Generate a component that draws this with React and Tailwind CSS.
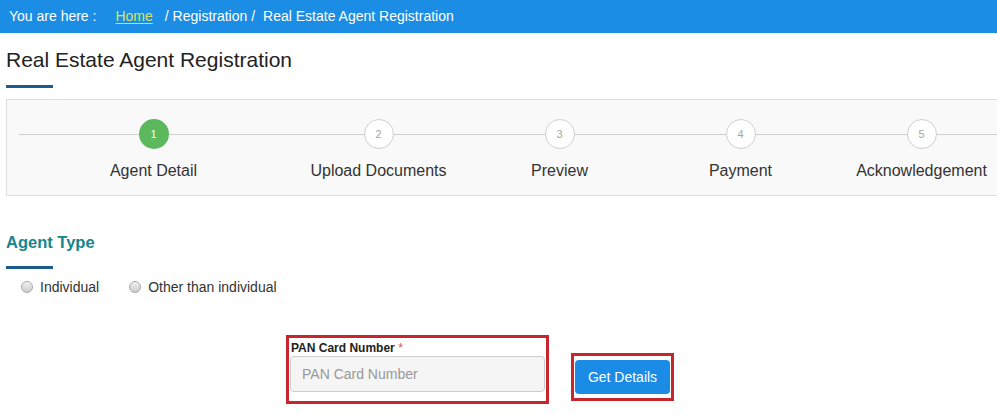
import React from "react";

const steps = [
  { n: 1, label: "Agent Detail" },
  { n: 2, label: "Upload Documents" },
  { n: 3, label: "Preview" },
  { n: 4, label: "Payment" },
  { n: 5, label: "Acknowledgement" },
];

function Radio({ label }) {
  return (
    <label className="flex items-center gap-[7px] text-[14px] leading-[20px] text-[#333]">
      <span className="w-[12px] h-[12px] rounded-full border border-[#a8a8a8] bg-linear-to-b from-[#f0f0f0] to-[#cdcdcd]" />
      {label}
    </label>
  );
}

export default function App() {
  return (
    <div className="w-[997px] h-[415px] overflow-hidden bg-white font-['Liberation_Sans',Arial,sans-serif]">
      {/* breadcrumb */}
      <div className="h-[33px] bg-[#1b8de4] flex items-center pl-[9px] text-[14px] text-white">
        <span>You are here :</span>
        <span className="ml-[19px] text-[#d8e36c] underline underline-offset-2">Home</span>
        <span className="ml-[12px]">/ Registration /</span>
        <span className="ml-[8px]">Real Estate Agent Registration</span>
      </div>

      <div className="pl-[6px]">
        <h1 className="mt-[14px] text-[21px] leading-[25px] text-[#222]">Real Estate Agent Registration</h1>
        <div className="mt-[13px] w-[47px] h-[3px] bg-[#1c5b8c]" />

        {/* stepper */}
        <div className="relative mt-[11px] w-[1000px] h-[97px] border border-[#dedede] bg-[#f9f9f9]">
          <div className="absolute left-[12px] right-0 top-[34px] h-px bg-[#cfcfcf]" />
          <div className="relative flex pl-[56px] pt-[19px]">
            {steps.map((s, i) => (
              <div key={s.n} className={"w-[181px] shrink-0 flex flex-col items-center " + (i === 1 ? "ml-[44px]" : "")}>
                {s.n === 1 ? (
                  <div className="w-[30px] h-[30px] rounded-full bg-[#5cb85c] flex items-center justify-center text-[11px] text-white">
                    {s.n}
                  </div>
                ) : (
                  <div className="w-[30px] h-[30px] rounded-full border border-[#cfcfcf] bg-white flex items-center justify-center text-[11px] text-[#a5a5a5]">
                    {s.n}
                  </div>
                )}
                <div className="mt-[12px] text-[16px] leading-[20px] text-[#333] whitespace-nowrap">{s.label}</div>
              </div>
            ))}
          </div>
        </div>

        {/* agent type */}
        <h2 className="mt-[36px] text-[16.5px] leading-[20px] font-bold text-[#17868c]">Agent Type</h2>
        <div className="mt-[14px] w-[47px] h-[3px] bg-[#1c5b8c]" />
        <div className="mt-[8px] flex gap-[30px] pl-[15px]">
          <Radio label="Individual" />
          <Radio label="Other than individual" />
        </div>

        {/* PAN form */}
        <div className="mt-[38px] ml-[280px] flex items-start">
          <div className="w-[263px] h-[69px] border-[3px] border-[#c8262f] px-[1px] pt-[2px]">
            <div className="pl-[1px] text-[12px] leading-[16px] font-bold text-[#222]">
              PAN Card Number <span className="text-[#d9534f] font-normal">*</span>
            </div>
            <div className="h-[36px] rounded-[4px] border border-[#cccccc] bg-[#f5f5f5] flex items-center pl-[11px] text-[14px] text-[#999]">
              PAN Card Number
            </div>
          </div>
          <div className="ml-[22px] mt-[18px] w-[103px] h-[48px] border-[3px] border-[#c8262f] px-[1px] pt-[4px]">
            <button className="w-full h-[34px] rounded-[4px] bg-[#1a8ce6] text-white text-[14px]">Get Details</button>
          </div>
        </div>
      </div>
    </div>
  );
}
